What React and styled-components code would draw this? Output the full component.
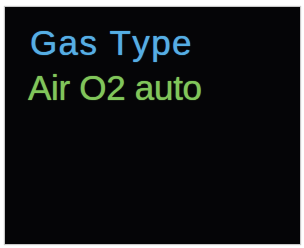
import React from "react";
import styled, { createGlobalStyle } from "styled-components";

const GlobalStyle = createGlobalStyle`
    html, body {
        margin: 0;
        padding: 0;
        background: #ffffff;
    }
`;

const Page = styled.div`
    width: 304px;
    height: 248px;
    padding: 7px 4px 4px 5px;
    box-sizing: border-box;
    display: flex;
`;

const Screen = styled.div`
    flex: 1;
    background: #050507;
    box-shadow: 0 0 1px 1px #c8c8c8;
    padding: 13px 0 0 23px;
    display: flex;
    flex-direction: column;
    font-family: "Liberation Sans", Arial, sans-serif;
`;

// each line of the display, colour and spacing vary per line
const Line = styled.div`
    color: ${(p) => p.color};
    padding-left: ${(p) => p.indent || 0}px;
    letter-spacing: ${(p) => p.spacing || 0}px;
    font-size: 35px;
    line-height: 45px;
    font-kerning: none;
    white-space: nowrap;
    text-shadow: 0 0 1px ${(p) => p.color};
`;

const App = () => {
    return (
        <>
            <GlobalStyle />
            <Page>
                <Screen>
                    <Line color="#55aee4" indent={2} spacing={1.4}>
                        Gas Type
                    </Line>
                    <Line color="#80c65a" spacing={-0.3}>
                        Air O2 auto
                    </Line>
                </Screen>
            </Page>
        </>
    );
};

export default App;
